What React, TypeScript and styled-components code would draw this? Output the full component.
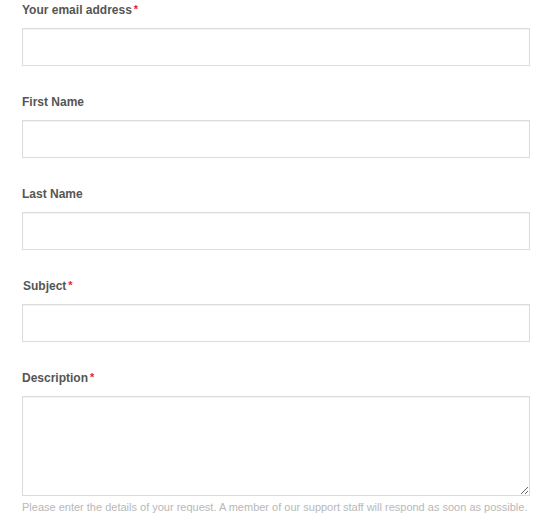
import styled, { createGlobalStyle } from 'styled-components';

const GlobalStyle = createGlobalStyle`
  html, body {
    margin: 0;
    padding: 0;
    background: #ffffff;
  }
  * {
    box-sizing: border-box;
  }
`;

const Form = styled.form`
  display: flex;
  flex-direction: column;
  width: 552px;
  padding: 1px 22px 0 22px;
  font-family: "Liberation Sans", Arial, sans-serif;
`;

const Field = styled.div`
  display: flex;
  flex-direction: column;
  margin-bottom: 27px;
  &:last-child {
    margin-bottom: 0;
  }
`;

const Label = styled.label<{ $indent?: number }>`
  display: block;
  height: 18px;
  line-height: 18px;
  margin-bottom: 9px;
  padding-left: ${p => p.$indent ?? 0}px;
  font-size: 12px;
  font-weight: bold;
  color: #555555;
`;

const Required = styled.span`
  color: #e8213f;
  font-size: 11px;
  margin-left: 2px;
  vertical-align: top;
  position: relative;
  top: -1px;
`;

const TextInput = styled.input`
  display: block;
  width: 508px;
  height: 38px;
  margin: 0;
  padding: 6px 8px;
  border: 1px solid #dcdcdc;
  box-shadow: inset 0 1px 1px rgba(0, 0, 0, 0.05);
  background: #ffffff;
  font-family: inherit;
  font-size: 13px;
  outline: none;
`;

const TextArea = styled.textarea`
  display: block;
  width: 508px;
  height: 100px;
  margin: 0;
  padding: 6px 8px;
  border: 1px solid #dcdcdc;
  box-shadow: inset 0 1px 1px rgba(0, 0, 0, 0.05);
  background: #ffffff;
  font-family: inherit;
  font-size: 13px;
  outline: none;
`;

const Hint = styled.p`
  margin: 4px 0 0 0;
  font-size: 11px;
  line-height: 14px;
  color: #b8b8b8;
`;

const fields = [
  { label: 'Your email address', required: true },
  { label: 'First Name', required: false },
  { label: 'Last Name', required: false },
  { label: 'Subject', required: true, indent: 1 },
];

export default function App() {
  return (
    <>
      <GlobalStyle />
      <Form>
        {fields.map(f => (
          <Field key={f.label}>
            <Label $indent={f.indent}>
              {f.label}
              {f.required && <Required>*</Required>}
            </Label>
            <TextInput type="text" />
          </Field>
        ))}
        <Field>
          <Label>
            Description
            <Required>*</Required>
          </Label>
          <TextArea />
          <Hint>
            Please enter the details of your request. A member of our support staff will respond as soon as possible.
          </Hint>
        </Field>
      </Form>
    </>
  );
}
